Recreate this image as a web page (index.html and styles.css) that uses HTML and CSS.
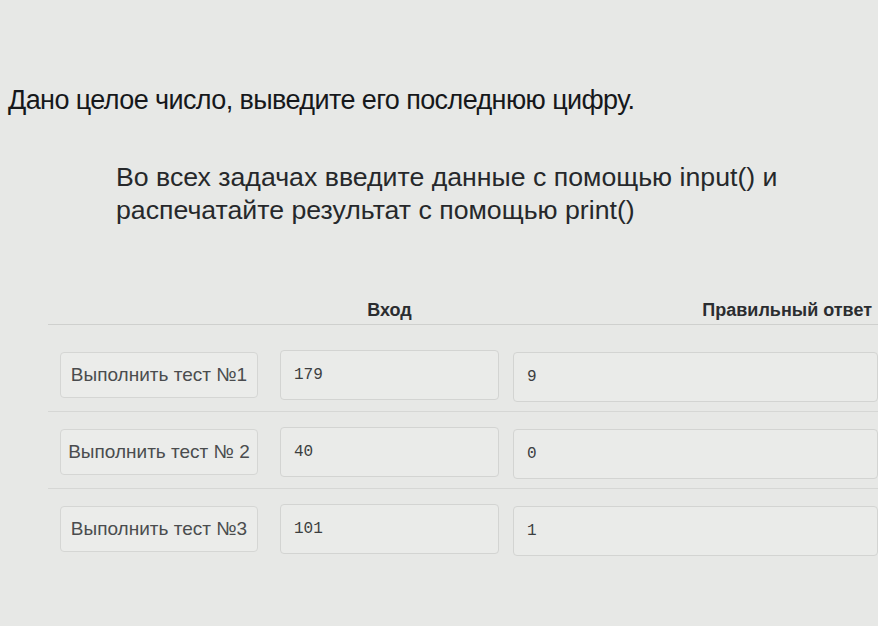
FILE: index.html
```html
<!DOCTYPE html>
<html lang="ru">
<head>
    <meta charset="UTF-8">
    <meta name="viewport" content="width=device-width, initial-scale=1.0">
    <title>Последняя цифра</title>
    <link rel="stylesheet" href="styles.css">
</head>
<body>
    <div class="page">
        <h1 class="task-title">Дано целое число, выведите его последнюю цифру.</h1>

        <p class="task-note">Во всех задачах введите данные с помощью input() и распечатайте результат с помощью print()</p>

        <div class="tests">
            <div class="tests-head">
                <div></div>
                <div class="head-in">Вход</div>
                <div class="head-out">Правильный ответ</div>
            </div>

            <!-- тесты -->
            <div class="test-row first">
                <button class="btn-run">Выполнить тест №1</button>
                <div class="box">179</div>
                <div class="box answer">9</div>
            </div>
            <div class="test-row">
                <button class="btn-run">Выполнить тест № 2</button>
                <div class="box">40</div>
                <div class="box answer">0</div>
            </div>
            <div class="test-row last">
                <button class="btn-run">Выполнить тест №3</button>
                <div class="box">101</div>
                <div class="box answer">1</div>
            </div>
        </div>
    </div>
</body>
</html>
```

FILE: styles.css
```css
/* Base */
* {
    margin: 0;
    padding: 0;
    box-sizing: border-box;
}

body {
    background-color: #e7e8e6;
    color: #222;
    font-family: 'Liberation Sans', Arial, sans-serif;
    overflow: hidden;
}

.page {
    padding: 84px 0 0 8px;
}

/* Task text */
.task-title {
    font-size: 27px;
    font-weight: normal;
    color: #16181b;
    letter-spacing: -0.6px;
    line-height: 32px;
}

.task-note {
    margin: 45px 0 0 108px;
    width: 720px;
    font-size: 26.7px;
    line-height: 33px;
    color: #26282b;
}

/* Tests table */
.tests {
    margin: 73px 0 0 40px;
    width: 830px;
}

.tests-head,
.test-row {
    display: grid;
    grid-template-columns: 218px 219px 1fr;
    column-gap: 14px;
    align-items: center;
}

.tests-head {
    padding-bottom: 3px;
    line-height: 21px;
    border-bottom: 1px solid #cfd0ce;
    font-weight: bold;
    font-size: 18px;
    color: #2b2d30;
}

.head-in {
    text-align: center;
}

.head-out {
    text-align: right;
    padding-right: 6px;
}

.test-row {
    padding: 13px 0 9px;
    border-bottom: 1px solid #d6d7d5;
}

.test-row.first {
    padding-top: 23px;
}

.test-row.last {
    border-bottom: none;
}

.btn-run {
    margin-left: 12px;
    width: 198px;
    height: 46px;
    background-color: #ebecea;
    border: 1px solid #d5d6d4;
    border-radius: 4px;
    font-family: 'Liberation Sans', Arial, sans-serif;
    font-size: 19px;
    color: #4a4c4e;
}

.box {
    height: 50px;
    padding: 0 13px;
    display: flex;
    align-items: center;
    background-color: #eaebe9;
    border: 1px solid #d3d4d2;
    border-radius: 4px;
    font-family: 'Liberation Mono', 'DejaVu Sans Mono', monospace;
    font-size: 16px;
    color: #3c3e40;
}

.box.answer {
    margin-top: 4px;
}
```
